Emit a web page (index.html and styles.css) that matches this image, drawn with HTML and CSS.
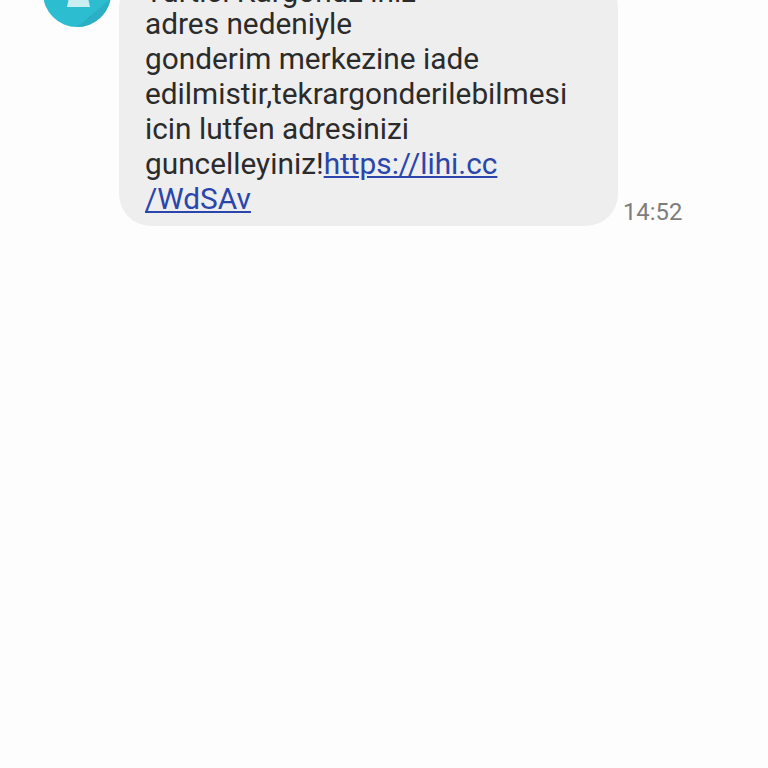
FILE: index.html
```html
<!DOCTYPE html>
<html lang="tr">
<head>
<meta charset="utf-8">
<title>Mesaj</title>
<link rel="stylesheet" href="styles.css">
</head>
<body>
<main class="thread">
  <div class="avatar">
    <svg width="68" height="68" viewBox="0 0 68 68">
      <circle cx="34" cy="34" r="34" fill="#2cbdd0"/>
      <path d="M34 68 L67.5 40 A34 34 0 0 1 34 68 Z" fill="#2aafc4"/>
      <path d="M27 34 H44 L47 48 H24 Z" fill="#c8eef2"/>
    </svg>
  </div>
  <div class="bubble">
    <p class="text"><span class="first-line">Yurtici Kargonuz iniz</span>adres nedeniyle<br>gonderim merkezine iade<br>edilmistir,tekrargonderilebilmesi<br>icin lutfen adresinizi<br>guncelleyiniz!<a href="#">https://lihi.cc<br>/WdSAv</a></p>
  </div>
  <time class="time">14:52</time>
</main>
</body>
</html>
```

FILE: styles.css
```css
html, body {
  margin: 0;
  height: 100%;
  background: #fdfdfd;
  overflow: hidden;
}
.thread {
  display: flex;
  align-items: flex-end;
  height: 226px;
  padding-left: 43px;
  font-family: Roboto, "Noto Sans", sans-serif;
}
.avatar {
  align-self: flex-start;
  width: 68px;
  height: 68px;
  margin-top: -41px;
  margin-right: 8px;
  flex: none;
}
.bubble {
  width: 499px;
  height: 250px;
  flex: none;
  box-sizing: border-box;
  margin-top: -24px;
  padding: 0 26px;
  background: #eeeeee;
  border-radius: 32px;
  overflow: hidden;
  display: flex;
  flex-direction: column;
  justify-content: flex-end;
}
.text {
  margin: 0 0 10px;
  font-size: 29.8px;
  line-height: 35px;
  color: #2b2b2b;
  white-space: nowrap;
}
.first-line {
  display: block;
  line-height: 29px;
}
.text a {
  color: #2a46ac;
  text-decoration: underline;
}
.time {
  margin-left: 5px;
  margin-bottom: 0;
  font-size: 23.8px;
  line-height: 28px;
  color: #7d7d7d;
}
```
